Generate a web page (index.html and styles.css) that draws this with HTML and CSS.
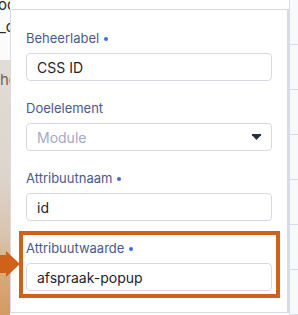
FILE: index.html
```html
<!DOCTYPE html>
<html lang="nl">
<head>
<meta charset="utf-8">
<link rel="stylesheet" href="styles.css">
</head>
<body>
<div class="scene">
  <div class="backdrop">
    <div class="left-strip">
      <div class="strip-top">
        <span class="frag frag-1">oo</span>
        <span class="frag frag-2">_d</span>
      </div>
      <div class="strip-photo">
        <span class="frag frag-3">he</span>
      </div>
    </div>
    <div class="middle"></div>
    <div class="right-strip">
      <div class="row"></div>
      <div class="row"></div>
      <div class="row"></div>
      <div class="row"></div>
      <div class="row"></div>
      <div class="row"></div>
      <div class="row"></div>
    </div>
  </div>

  <div class="panel">
    <div class="field">
      <label class="label">Beheerlabel <span class="dot"></span></label>
      <div class="input">CSS ID</div>
    </div>
    <div class="field">
      <label class="label">Doelelement</label>
      <div class="input select">
        <span class="placeholder">Module</span>
        <svg class="caret" width="9" height="6" viewBox="0 0 9 6"><path d="M0 0H9V1.2L4.5 6L0 1.2Z" fill="#2b303d"/></svg>
      </div>
    </div>
    <div class="field">
      <label class="label">Attribuutnaam <span class="dot"></span></label>
      <div class="input">id</div>
    </div>
    <div class="field highlighted">
      <label class="label">Attribuutwaarde <span class="dot"></span></label>
      <div class="input">afspraak-popup</div>
    </div>
  </div>

  <svg class="arrow" width="20" height="26" viewBox="0 0 20 26"><path d="M0 4H6V0L20 13L6 26V22H0Z" fill="#d0611b"/></svg>
</div>
</body>
</html>
```
FILE: styles.css
```css
* { box-sizing: border-box; }
html, body { margin: 0; padding: 0; }
body {
  width: 298px;
  height: 315px;
  overflow: hidden;
  font-family: Inter, "Noto Sans", sans-serif;
  background: #ffffff;
}
.scene {
  position: relative;
  width: 298px;
  height: 315px;
  overflow: hidden;
}
.backdrop {
  display: flex;
  height: 100%;
}
.left-strip {
  width: 10px;
  display: flex;
  flex-direction: column;
  overflow: hidden;
}
.strip-top {
  height: 60px;
  background: #fbfbfb;
  position: relative;
}
.strip-photo {
  flex: 1;
  background: linear-gradient(180deg, #e2dcd6 0%, #ddd5cd 45%, #d9c4b0 68%, #d8a878 85%, #d49a62 100%);
}
.frag {
  display: block;
  font-size: 15px;
  line-height: 16px;
  color: #2a2a2a;
  white-space: nowrap;
  margin-left: -2px;
}
.frag-1 { margin-top: -3px; }
.frag-2 { margin-top: 6px; margin-left: -1px; }
.frag-3 { margin-top: 12px; color: #6a6561; margin-left: 0; }
.middle { width: 279px; background: #ffffff; }
.right-strip {
  flex: 1;
  background: #f8f9fc;
  border-left: 1px solid #d8dce8;
  display: flex;
  flex-direction: column;
  padding-top: 44px;
}
.row {
  height: 45px;
  flex: none;
  border-top: 1px solid #d8dce8;
}

.panel {
  position: absolute;
  left: 10px;
  top: 9px;
  width: 279px;
  height: 304px;
  background: #ffffff;
  border: 1px solid #d7dbe7;
  border-right-width: 2px;
  padding: 20px 15px 0 15px;
  display: flex;
  flex-direction: column;
  gap: 19px;
}
.field {
  display: flex;
  flex-direction: column;
  gap: 7px;
}
.label {
  font-size: 13px;
  line-height: 16px;
  color: #4b5a8c;
  display: flex;
  align-items: center;
  gap: 5px;
}
.dot {
  width: 4px;
  height: 4px;
  border-radius: 50%;
  background: #3a6ee8;
  margin-top: 2px;
}
.input {
  height: 28px;
  border: 1px solid #d5d9e6;
  border-radius: 4px;
  padding: 0 10px;
  font-size: 14px;
  color: #1f2330;
  display: flex;
  align-items: center;
}
.select {
  justify-content: space-between;
  padding-right: 10px;
}
.placeholder { color: #a3abc3; }
.caret { display: block; }

.highlighted { position: relative; }
.highlighted::after {
  content: "";
  position: absolute;
  left: -7px;
  right: -8px;
  top: -9px;
  bottom: -7px;
  border: 4px solid #d0611b;
  pointer-events: none;
}
.arrow {
  position: absolute;
  left: 0;
  top: 251px;
}
```
